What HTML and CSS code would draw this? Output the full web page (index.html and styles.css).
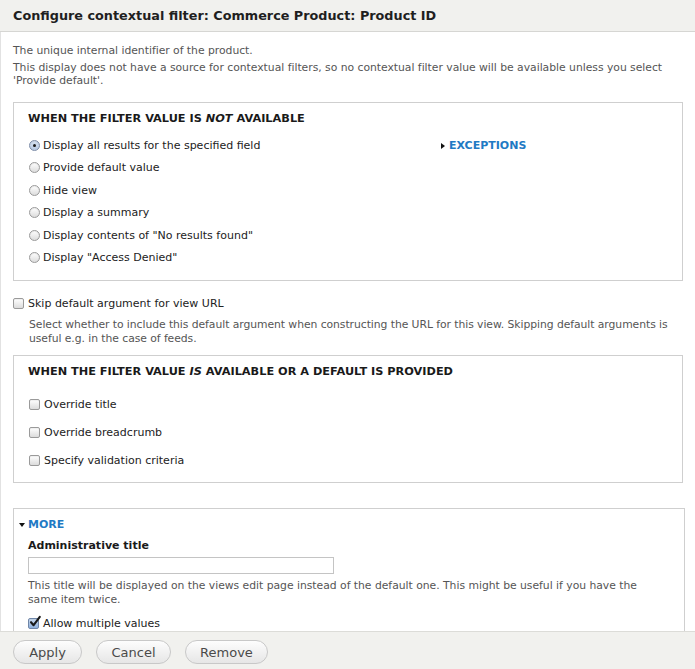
FILE: index.html
```html
<!DOCTYPE html>
<html>
<head>
<meta charset="utf-8">
<link rel="stylesheet" href="styles.css">
</head>
<body>
<div class="dialog">
  <div class="titlebar">
    <h1 class="title">Configure contextual filter: Commerce Product: Product ID</h1>
  </div>
  <div class="content">
    <div class="intro">
      <p class="desc">The unique internal identifier of the product.</p>
      <p class="desc">This display does not have a source for contextual filters, so no contextual filter value will be available unless you select 'Provide default'.</p>
    </div>

    <div class="box box-first">
      <div class="legend">When the filter value is <em>not</em> available</div>
      <div class="cols">
        <div class="radios">
          <label class="opt"><span class="radio checked"></span>Display all results for the specified field</label>
          <label class="opt"><span class="radio"></span>Provide default value</label>
          <label class="opt"><span class="radio"></span>Hide view</label>
          <label class="opt"><span class="radio"></span>Display a summary</label>
          <label class="opt"><span class="radio"></span>Display contents of "No results found"</label>
          <label class="opt"><span class="radio"></span>Display "Access Denied"</label>
        </div>
        <div class="exceptions"><span class="tri-right"></span><a class="link">Exceptions</a></div>
      </div>
    </div>

    <label class="skip"><span class="check"></span>Skip default argument for view URL</label>
    <p class="help"><span class="nowrap">Select whether to include this default argument when constructing the URL for this view. Skipping default arguments is</span> useful e.g. in the case of feeds.</p>

    <div class="box box-second">
      <div class="legend">When the filter value <em>is</em> available or a default is provided</div>
      <div class="checks">
        <label class="copt"><span class="check"></span>Override title</label>
        <label class="copt"><span class="check"></span>Override breadcrumb</label>
        <label class="copt"><span class="check"></span>Specify validation criteria</label>
      </div>
    </div>

    <div class="box box-more">
      <div class="more-head"><span class="tri-down"></span><a class="link">More</a></div>
      <div class="more-body">
        <div class="field-label">Administrative title</div>
        <div class="text-input"></div>
        <p class="help2">This title will be displayed on the views edit page instead of the default one. This might be useful if you have the same item twice.</p>
        <label class="allow"><span class="check checked"><svg viewBox="0 0 14 14" width="14" height="14"><path d="M3 7.2 L5.6 10.2 L11.8 1.8" fill="none" stroke="#1a1a1a" stroke-width="2.1" stroke-linecap="round" stroke-linejoin="round"/></svg></span>Allow multiple values</label>
      </div>
    </div>
  </div>
  <div class="buttonbar">
    <span class="btn btn-apply">Apply</span>
    <span class="btn btn-cancel">Cancel</span>
    <span class="btn btn-remove">Remove</span>
  </div>
</div>
</body>
</html>
```

FILE: styles.css
```css
html, body {
  margin: 0;
  padding: 0;
  background: #fff;
}
body {
  font-family: "DejaVu Sans", "Liberation Sans", sans-serif;
  color: #333;
  width: 695px;
  height: 669px;
  overflow: hidden;
}
.dialog {
  display: flex;
  flex-direction: column;
  height: 669px;
}
.titlebar {
  height: 31px;
  background: #f1f1ee;
  border-bottom: 1px solid #d6d6d3;
  display: flex;
  align-items: center;
  padding-left: 13px;
  flex: none;
}
.title {
  margin: 0;
  font-size: 12.8px;
  font-weight: bold;
  color: #1f1f1f;
}
.content {
  flex: 1;
  overflow: hidden;
  padding: 0 12px 0 12px;
  border-left: 1px solid #e2e2e2;
}
.intro {
  padding-top: 12px;
}
.desc {
  margin: 0 0 4px 0;
  font-size: 10.8px;
  line-height: 13px;
  color: #555;
  letter-spacing: -0.02px;
}
.box {
  border: 1px solid #cfcfcf;
  background: #fff;
  padding: 0 14px;
}
.box-first {
  margin-top: 15px;
  height: 177px;
}
.legend {
  font-size: 11.3px;
  font-weight: bold;
  text-transform: uppercase;
  color: #1a1a1a;
  line-height: 14px;
  padding-top: 9px;
}
.legend em {
  font-style: italic;
}
.cols {
  display: flex;
  align-items: flex-start;
  padding-top: 13px;
}
.radios {
  width: 413px;
  display: flex;
  flex-direction: column;
  gap: 9.4px;
}
.opt, .copt, .skip, .allow {
  display: flex;
  align-items: center;
  font-size: 11px;
  line-height: 13px;
  color: #222;
}
.opt {
  padding-left: 1px;
}
.radio {
  width: 11px;
  height: 11px;
  border-radius: 50%;
  border: 1px solid #9a9a9a;
  background: linear-gradient(#ffffff, #dcdcdc);
  margin-right: 3px;
  box-sizing: border-box;
  position: relative;
  flex: none;
  box-shadow: inset 0 1px 1px rgba(0,0,0,0.08);
}
.radio.checked {
  background: linear-gradient(#d7e3f3, #b7c9e2);
  border-color: #7c8ca8;
}
.radio.checked::after {
  content: "";
  position: absolute;
  width: 3px;
  height: 3px;
  border-radius: 50%;
  background: #1a1a1a;
  left: 3px;
  top: 3px;
}
.exceptions {
  display: flex;
  align-items: center;
  font-size: 11px;
  line-height: 13px;
}
.tri-right {
  width: 0;
  height: 0;
  border-top: 3.5px solid transparent;
  border-bottom: 3.5px solid transparent;
  border-left: 4px solid #111;
  margin-right: 4px;
}
.tri-down {
  width: 0;
  height: 0;
  border-left: 3.5px solid transparent;
  border-right: 3.5px solid transparent;
  border-top: 4px solid #111;
  margin-right: 3px;
}
.link {
  color: #1f7ac4;
  font-weight: bold;
  text-transform: uppercase;
  text-decoration: none;
}
.check {
  width: 11px;
  height: 11px;
  border: 1px solid #9a9a9a;
  border-radius: 2px;
  background: linear-gradient(#ffffff, #dcdcdc);
  box-sizing: border-box;
  margin-right: 4px;
  flex: none;
  position: relative;
  box-shadow: inset 0 1px 1px rgba(0,0,0,0.06);
}
.skip {
  margin-top: 16px;
}
.skip .check {
  margin-right: 4px;
}
.help {
  margin: 8px 0 0 16px;
  font-size: 10.8px;
  line-height: 14px;
  color: #555;
  letter-spacing: -0.06px;
}
.nowrap {
  white-space: nowrap;
}
.box-second {
  margin-top: 9px;
  height: 126px;
}
.checks {
  display: flex;
  flex-direction: column;
  gap: 15px;
  padding-top: 19px;
}
.copt {
  padding-left: 1px;
}
.box-more {
  margin-top: 25px;
  padding-left: 0;
  margin-right: -2px;
  height: 200px;
}
.more-head {
  display: flex;
  align-items: center;
  padding: 9px 0 0 5px;
  font-size: 11px;
  line-height: 13px;
}
.more-body {
  padding-left: 14px;
}
.field-label {
  font-size: 11px;
  font-weight: bold;
  color: #1a1a1a;
  line-height: 14px;
  margin-top: 8px;
}
.text-input {
  width: 304px;
  height: 15px;
  border: 1px solid #c4c4c4;
  margin-top: 4px;
  background: #fff;
}
.help2 {
  margin: 5px 0 0 0;
  max-width: 630px;
  font-size: 10.8px;
  line-height: 13.5px;
  color: #555;
  letter-spacing: -0.02px;
}
.allow {
  margin-top: 11px;
}
.check.checked {
  background: linear-gradient(#c9daf0, #8fb0dc);
  border-color: #6f86a8;
}
.check.checked svg {
  position: absolute;
  left: -1px;
  top: -4px;
}
.buttonbar {
  flex: none;
  height: 38px;
  background: #f1f1ee;
  border-top: 1px solid #dcdcd8;
  display: flex;
  align-items: flex-start;
  padding: 8px 0 0 13px;
  box-sizing: border-box;
}
.btn {
  display: inline-flex;
  align-items: center;
  justify-content: center;
  height: 24px;
  box-sizing: border-box;
  border: 1px solid #c8c8c8;
  border-radius: 13px;
  background: linear-gradient(#fdfdfd, #e6e6e6);
  font-size: 13px;
  color: #4a4a4a;
  margin-right: 14px;
}
.btn-apply { width: 69px; }
.btn-cancel { width: 75px; }
.btn-remove { width: 83px; }
```
